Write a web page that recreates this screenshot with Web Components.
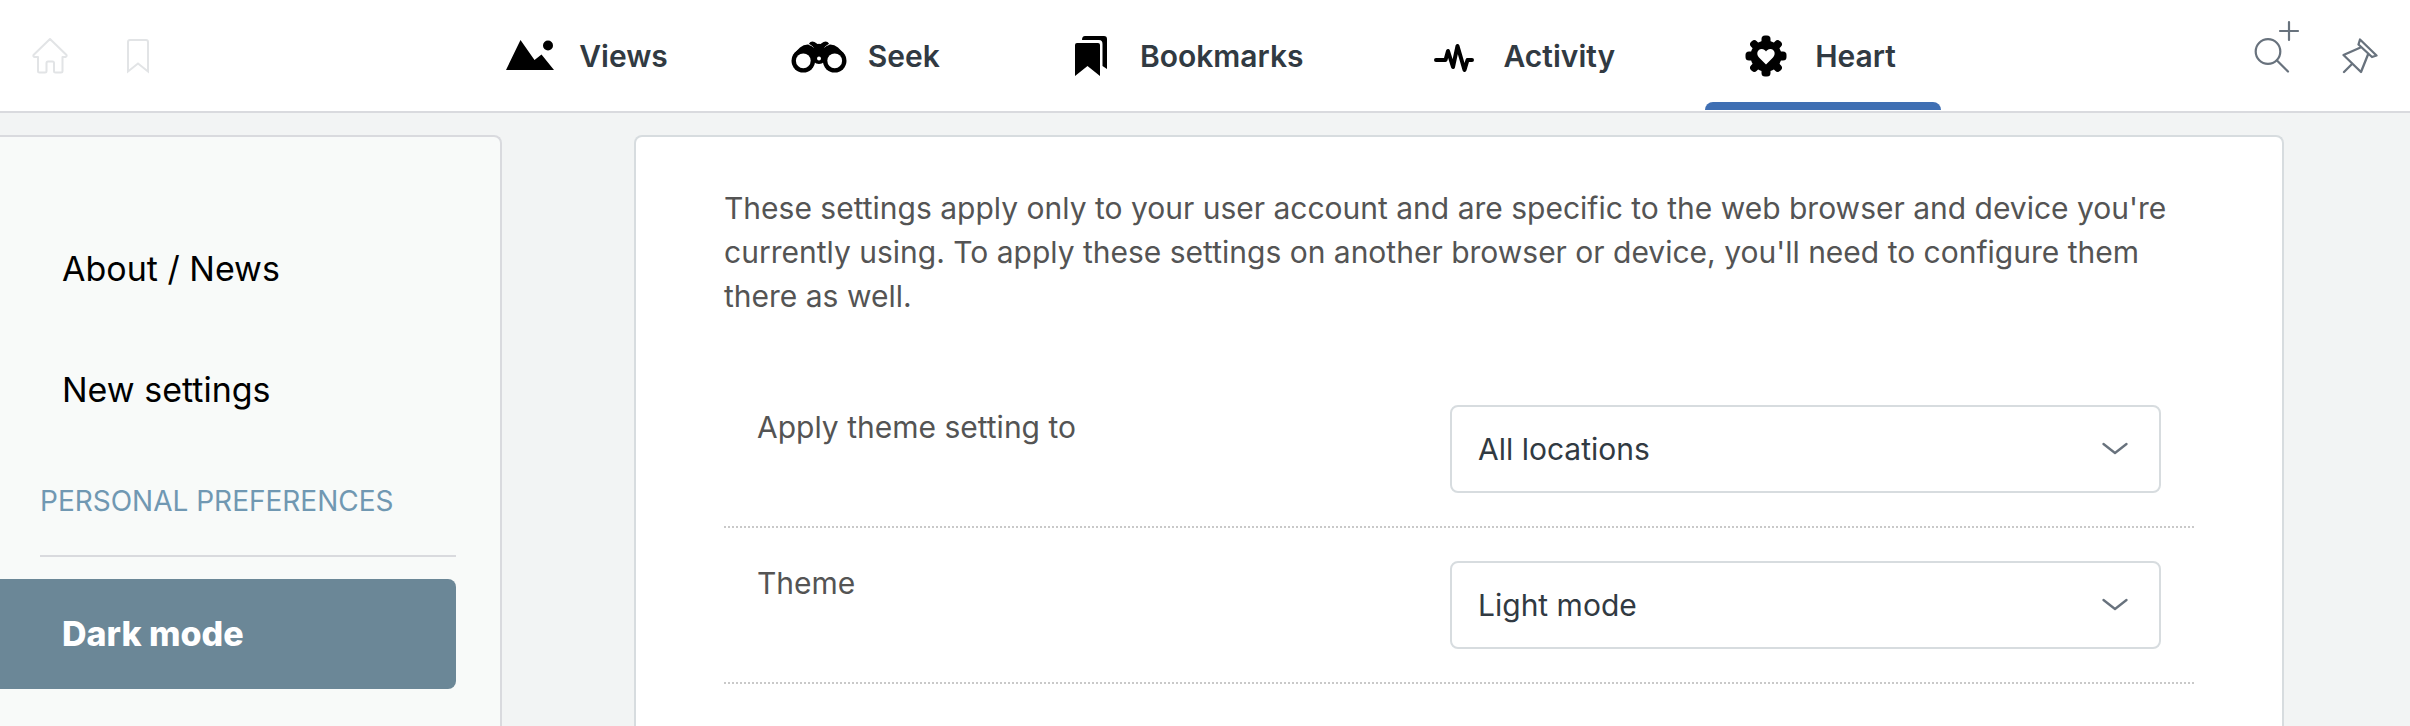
<!DOCTYPE html>
<html lang="en">
<head>
<meta charset="utf-8">
<meta name="viewport" content="width=device-width, initial-scale=1">
<title>Heart - Dark mode</title>
<style>
  :root {
    --font-ui: Inter, Roboto, sans-serif;
    --color-page: #f2f4f4;
    --color-side: #f8faf9;
    --color-card: #ffffff;
    --color-border: #d9dade;
    --color-field-border: #d7dcdf;
    --color-text: #545454;
    --color-strong: #313a42;
    --color-icon: #68727d;
    --color-accent: #3f6fb3;
    --color-selected: #6b8797;
    --color-section: #7098b2;
    --radius: 8px;
    --size-md: 30px;
  }

  body {
    margin: 0;
    background: var(--color-page);
    font-family: var(--font-ui);
    font-size: var(--size-md);
    line-height: 44px;
    color: var(--color-text);
  }
</style>
</head>
<body>
<settings-page>
  <app-header slot="header">
    <icon-button slot="start" icon="home" label="Home" faded></icon-button>
    <icon-button slot="start" icon="bookmark" label="Bookmark" faded></icon-button>
    <nav-tab icon="views" href="#views">Views</nav-tab>
    <nav-tab icon="seek" href="#seek">Seek</nav-tab>
    <nav-tab icon="bookmarks" href="#bookmarks">Bookmarks</nav-tab>
    <nav-tab icon="activity" href="#activity">Activity</nav-tab>
    <nav-tab icon="heart" href="#heart" active>Heart</nav-tab>
    <icon-button slot="end" icon="search" label="New search"></icon-button>
    <icon-button slot="end" icon="pin" label="Pin"></icon-button>
  </app-header>

  <side-menu slot="side">
    <menu-item href="#about">About / News</menu-item>
    <menu-item href="#new">New settings</menu-item>
    <menu-heading>PERSONAL PREFERENCES</menu-heading>
    <menu-item href="#dark-mode" selected>Dark mode</menu-item>
  </side-menu>

  <settings-card>
    <p slot="intro">These settings apply only to your user account and are specific to the web browser and device you're currently using. To apply these settings on another browser or device, you'll need to configure them there as well.</p>
    <setting-row name="scope" label="Apply theme setting to" options="All locations|This location"></setting-row>
    <setting-row name="theme" label="Theme" options="Light mode|Dark mode"></setting-row>
  </settings-card>
</settings-page>

<script>
const ICONS = {
  home: `<svg width="36" height="36" viewBox="0 0 36 36" fill="none" stroke="currentColor" stroke-width="2" stroke-linejoin="round">
    <path d="M18 1 L1.5 17 Q1 18.5 2.500 19 H6 V33 Q6 34.500 7.500 34.500 H13 Q14.500 34.500 14.500 33 V25 Q14.500 23.500 16 23.500 H20.500 Q22 23.500 22 25 V33 Q22 34.500 23.500 34.500 H29 Q30.500 34.500 30.500 33 V19 H33.500 Q35 18.500 34.500 17 Z"/>
  </svg>`,
  bookmark: `<svg width="24" height="36" viewBox="0 0 24 36" fill="none" stroke="currentColor" stroke-width="2">
    <path d="M2 33.500 V4 Q2 2 4 2 H20 Q22 2 22 4 V33.500 L12 25.500 Z"/>
  </svg>`,
  views: `<svg width="50" height="40" viewBox="0 0 50 40" fill="currentColor">
    <path d="M1 34 L15.500 4 L29.500 24 L36.500 18.500 L49 34 Z"/>
    <circle cx="43" cy="9.500" r="5"/>
  </svg>`,
  seek: `<svg width="56" height="36" viewBox="0 0 56 36">
    <g fill="currentColor">
      <circle cx="12.300" cy="22.800" r="11.800"/>
      <circle cx="43.700" cy="22.800" r="11.800"/>
      <path d="M3 15.500 L9 9.500 Q13 6 18 6.500 L26 12 V6.500 Q28 5 30 6.500 V12 L38 6.500 Q43 6 47 9.500 L53 15.500 L33 24 Q31 26 28 26 Q25 26 23 24 Z"/>
      <path d="M18 5.500 Q20 2.500 23.500 4 L26.500 6 H29.500 L32.500 4 Q36 2.500 38 5.500 L31 14 H25 Z"/>
    </g>
    <path d="M17.500 6.500 Q21 7 22.500 9.500 M38.500 6.500 Q35 7 33.500 9.500" stroke="#fff" stroke-width=".6" fill="none"/>
    <g fill="#fff">
      <circle cx="12.300" cy="22.800" r="7.400"/>
      <circle cx="43.700" cy="22.800" r="7.400"/>
      <circle cx="28" cy="20.500" r="2"/>
    </g>
  </svg>`,
  bookmarks: `<svg width="34" height="40" viewBox="0 0 34 40" fill="currentColor">
    <path d="M1 40 V9 Q1 7 3 7 H24 Q26 7 26 9 V40 L13.500 30 Z"/>
    <path d="M8 4 Q8 0 11 0 H30 Q33 0 33 3 V33 L28.500 30 V8 Q28.500 4 25 4 Z"/>
  </svg>`,
  activity: `<svg width="42" height="34" viewBox="0 0 42 34" fill="none" stroke="currentColor" stroke-width="4" stroke-linecap="round" stroke-linejoin="round">
    <path d="M3 21 H12.500 L15 12 L20 28 L24.500 7 L31.500 31 L34.500 21 H39"/>
  </svg>`,
  heart: `<svg width="42" height="42" viewBox="-21 -21 42 42">
    <g fill="currentColor">
      <circle r="15.500"/>
      <rect x="-4.500" y="-20.500" width="9" height="41" rx="3.500"/>
      <rect x="-20.500" y="-4.500" width="41" height="9" rx="3.500"/>
      <g transform="rotate(45)">
        <rect x="-4" y="-20.500" width="8" height="41" rx="3.500"/>
        <rect x="-20.500" y="-4" width="41" height="8" rx="3.500"/>
      </g>
    </g>
    <path fill="#fff" d="M0 8.500 L-7 1.500 C-10.500 -2.500 -8 -7 -4.500 -7 C-2 -7 -.5 -5.500 0 -4.500 C.5 -5.500 2 -7 4.500 -7 C8 -7 10.500 -2.500 7 1.500 Z"/>
  </svg>`,
  search: `<svg width="36" height="72" viewBox="0 0 36 72" overflow="visible" fill="none" stroke="currentColor" stroke-width="2.200" stroke-linecap="round">
    <circle cx="14" cy="31.500" r="12.300"/>
    <path d="M23 40.500 L34 51.500 M26 11 H44 M35 2 V20"/>
  </svg>`,
  pin: `<svg width="36" height="36" viewBox="0 0 36 36" fill="none" stroke="currentColor" stroke-width="2.300" stroke-linecap="round" stroke-linejoin="round">
    <path d="M18 1.500 L34.500 17.500 L30 19 L16.500 6.500 Z M18.500 9.500 L1.500 17 L19 34 L26 16.500 M10 26 L2 34"/>
  </svg>`,
  chevron: `<svg width="26" height="14" viewBox="0 0 26 14" fill="none" stroke="currentColor" stroke-width="2.300" stroke-linecap="round" stroke-linejoin="round">
    <path d="M1.500 2 L13 11 L24.500 2"/>
  </svg>`
};

class SettingsPage extends HTMLElement {
  constructor() {
    super();
    this.attachShadow({ mode: 'open' });
  }

  connectedCallback() {
    this.shadowRoot.innerHTML = `
      <style>
        :host {
          display: flex;
          flex-direction: column;
          height: 100vh;
          overflow: hidden;
        }

        .body {
          display: flex;
          flex: 1;
          gap: 132px;
          padding: 22px 126px 0 0;
        }

        main {
          display: flex;
          flex: 1;
        }
      </style>

      <slot name="header"></slot>
      <div class="body">
        <slot name="side"></slot>
        <main><slot></slot></main>
      </div>
    `;
  }
}

class AppHeader extends HTMLElement {
  constructor() {
    super();
    this.attachShadow({ mode: 'open' });
  }

  connectedCallback() {
    this.shadowRoot.innerHTML = `
      <style>
        :host {
          display: block;
          background: var(--color-card);
          border-bottom: 2px solid var(--color-border);
        }

        header {
          display: flex;
          justify-content: space-between;
          height: 111px;
          padding: 0 6px;
        }

        .group {
          display: flex;
        }

        nav {
          display: flex;
          gap: 45px;
        }
      </style>

      <header>
        <div class="group"><slot name="start"></slot></div>
        <nav aria-label="Main"><slot></slot></nav>
        <div class="group"><slot name="end"></slot></div>
      </header>
    `;
  }
}

class IconButton extends HTMLElement {
  constructor() {
    super();
    this.attachShadow({ mode: 'open' });
  }

  connectedCallback() {
    const icon = this.getAttribute('icon');
    const label = this.getAttribute('label') || icon;

    this.shadowRoot.innerHTML = `
      <style>
        :host {
          display: flex;
          color: var(--color-icon);
        }

        :host([faded]) {
          color: #e2e4e6;
        }

        button {
          display: flex;
          align-items: center;
          justify-content: center;
          width: 88px;
          padding: 0;
          border: none;
          background: none;
          color: inherit;
          cursor: pointer;
        }
      </style>

      <button type="button" aria-label="${label}">${ICONS[icon]}</button>
    `;
  }
}

class NavTab extends HTMLElement {
  constructor() {
    super();
    this.attachShadow({ mode: 'open' });
  }

  connectedCallback() {
    const icon = this.getAttribute('icon');
    const current = this.hasAttribute('active') ? 'aria-current="page"' : '';

    this.shadowRoot.innerHTML = `
      <style>
        :host {
          display: flex;
        }

        a {
          position: relative;
          display: flex;
          align-items: center;
          gap: 21px;
          padding: 0 45px 0 33px;
          color: var(--color-strong);
          font-weight: 600;
          text-decoration: none;
        }

        .icon {
          display: flex;
          justify-content: center;
          width: 56px;
          color: #000;
        }

        /* marker for the current tab, laid over the bottom of the link */
        :host([active]) a::after {
          content: '';
          position: absolute;
          left: 0;
          right: 0;
          bottom: 1px;
          height: 8px;
          border-radius: var(--radius) var(--radius) 0 0;
          background: var(--color-accent);
        }
      </style>

      <a href="${this.getAttribute('href')}" ${current}>
        <span class="icon">${ICONS[icon]}</span>
        <span><slot></slot></span>
      </a>
    `;
  }
}

class SideMenu extends HTMLElement {
  constructor() {
    super();
    this.attachShadow({ mode: 'open' });
  }

  connectedCallback() {
    this.shadowRoot.innerHTML = `
      <style>
        :host {
          display: block;
          flex: none;
          box-sizing: border-box;
          width: 502px;
          padding: 77px 44px 0 0;
          border: 2px solid var(--color-border);
          border-width: 2px 2px 0 0;
          border-top-right-radius: var(--radius);
          background: var(--color-side);
        }

        nav {
          display: flex;
          flex-direction: column;
          gap: 11px;
        }
      </style>

      <nav aria-label="Settings"><slot></slot></nav>
    `;
  }
}

class MenuHeading extends HTMLElement {
  constructor() {
    super();
    this.attachShadow({ mode: 'open' });
  }

  connectedCallback() {
    this.shadowRoot.innerHTML = `
      <style>
        :host {
          display: block;
          margin: 23px 0 11px 40px;
          padding-bottom: 32px;
          border-bottom: 2px solid var(--color-border);
          color: var(--color-section);
        }

        h2 {
          margin: 0;
          font-size: 28px;
          font-weight: 400;
        }
      </style>

      <h2><slot></slot></h2>
    `;
  }
}

class MenuItem extends HTMLElement {
  constructor() {
    super();
    this.attachShadow({ mode: 'open' });
  }

  connectedCallback() {
    this.shadowRoot.innerHTML = `
      <style>
        :host {
          display: block;
        }

        a {
          display: block;
          padding: 33px 0 33px 62px;
          border-radius: 0 var(--radius) var(--radius) 0;
          color: #000;
          font-size: 34px;
          text-decoration: none;
        }

        :host([selected]) a {
          background: var(--color-selected);
          color: #fff;
          font-weight: 800;
        }
      </style>

      <a href="${this.getAttribute('href')}"><slot></slot></a>
    `;
  }
}

class SettingsCard extends HTMLElement {
  constructor() {
    super();
    this.attachShadow({ mode: 'open' });
  }

  connectedCallback() {
    this.shadowRoot.innerHTML = `
      <style>
        :host {
          display: block;
          flex: 1;
          padding: 49px 88px 0;
          border: 2px solid var(--color-field-border);
          border-bottom: none;
          border-radius: var(--radius) var(--radius) 0 0;
          background: var(--color-card);
        }

        ::slotted(p) {
          margin: 0 0 54px;
        }
      </style>

      <slot name="intro"></slot>
      <form><slot></slot></form>
    `;
  }
}

class SettingRow extends HTMLElement {
  constructor() {
    super();
    this.attachShadow({ mode: 'open' });
  }

  connectedCallback() {
    const name = this.getAttribute('name');
    const options = this.getAttribute('options').split('|');

    this.shadowRoot.innerHTML = `
      <style>
        :host {
          display: grid;
          grid-template-columns: 693fr 711fr;
          align-items: start;
          padding: 33px;
          border-bottom: 2px dotted #c9c9c9;
        }

        .field {
          position: relative;
        }

        select {
          appearance: none;
          box-sizing: border-box;
          width: 100%;
          height: 88px;
          padding: 0 88px 0 26px;
          border: 2px solid var(--color-field-border);
          border-radius: var(--radius);
          background: var(--color-card);
          color: var(--color-strong);
          font: inherit;
        }

        /* arrow over the select */
        .arrow {
          position: absolute;
          top: 0;
          bottom: 0;
          right: 33px;
          display: flex;
          align-items: center;
          color: var(--color-icon);
          pointer-events: none;
        }
      </style>

      <label for="${name}">${this.getAttribute('label')}</label>
      <div class="field">
        <select id="${name}" name="${name}">
          ${options.map((o) => `<option>${o}</option>`).join('')}
        </select>
        <span class="arrow">${ICONS.chevron}</span>
      </div>
    `;
  }
}

customElements.define('settings-page', SettingsPage);
customElements.define('app-header', AppHeader);
customElements.define('icon-button', IconButton);
customElements.define('nav-tab', NavTab);
customElements.define('side-menu', SideMenu);
customElements.define('menu-heading', MenuHeading);
customElements.define('menu-item', MenuItem);
customElements.define('settings-card', SettingsCard);
customElements.define('setting-row', SettingRow);
</script>
</body>
</html>
